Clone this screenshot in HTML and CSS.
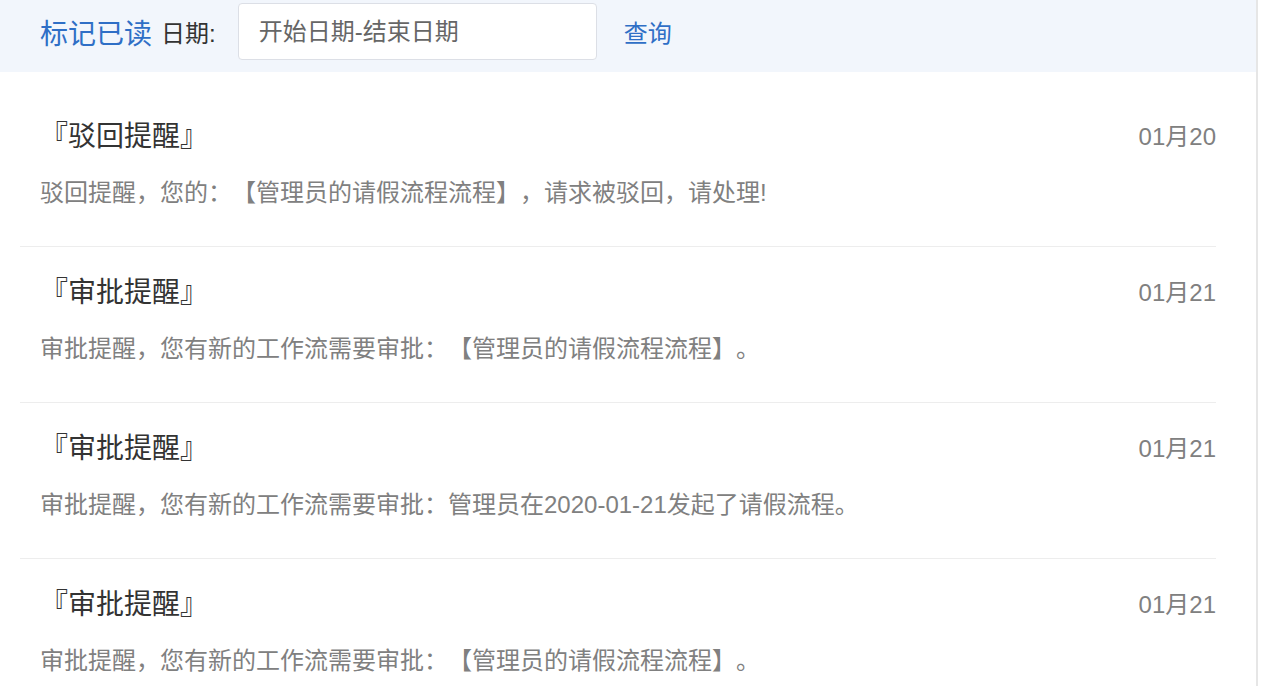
FILE: index.html
```html
<!DOCTYPE html>
<html lang="zh-CN">
<head>
    <meta charset="UTF-8">
    <title>消息提醒</title>
    <link rel="stylesheet" href="styles.css">
</head>
<body>
    <div class="page">
        <div class="toolbar">
            <a class="mark-read">标记已读</a>
            <span class="date-label">日期:</span>
            <input class="date-range" type="text" placeholder="开始日期-结束日期">
            <a class="query">查询</a>
        </div>
        <ul class="msg-list">
            <li class="msg">
                <div class="msg-head">
                    <span class="msg-title">『驳回提醒』</span>
                    <span class="msg-date">01月20</span>
                </div>
                <p class="msg-body">驳回提醒，您的：【管理员的请假流程流程】，请求被驳回，请处理!</p>
            </li>
            <li class="msg">
                <div class="msg-head">
                    <span class="msg-title">『审批提醒』</span>
                    <span class="msg-date">01月21</span>
                </div>
                <p class="msg-body">审批提醒，您有新的工作流需要审批：【管理员的请假流程流程】。</p>
            </li>
            <li class="msg">
                <div class="msg-head">
                    <span class="msg-title">『审批提醒』</span>
                    <span class="msg-date">01月21</span>
                </div>
                <p class="msg-body">审批提醒，您有新的工作流需要审批：管理员在2020-01-21发起了请假流程。</p>
            </li>
            <li class="msg">
                <div class="msg-head">
                    <span class="msg-title">『审批提醒』</span>
                    <span class="msg-date">01月21</span>
                </div>
                <p class="msg-body">审批提醒，您有新的工作流需要审批：【管理员的请假流程流程】。</p>
            </li>
        </ul>
    </div>
</body>
</html>
```

FILE: styles.css
```css
body {
    margin: 0;
    background: #fff;
    font-family: 'Liberation Sans', 'Noto Sans CJK SC', sans-serif;
    text-spacing-trim: space-all;
    overflow: hidden;
}

.page {
    width: 1256px;
    min-height: 100vh;
    border-right: 2px solid #e6e6e6;
}

.toolbar {
    display: flex;
    align-items: center;
    height: 57px;
    padding: 3px 0 12px 40px;
    background: #f2f6fc;
}

.mark-read {
    font-size: 28px;
    color: #2f6fc6;
    cursor: pointer;
}

.date-label {
    font-size: 24px;
    color: #333;
    margin-left: 9px;
}

.date-range {
    box-sizing: border-box;
    width: 359px;
    height: 57px;
    margin-left: 22px;
    padding: 0 20px;
    border: 1px solid #dcdfe6;
    border-radius: 4px;
    background: #fff;
    font-family: inherit;
    font-size: 24px;
    outline: none;
}

.date-range::placeholder {
    color: #666;
}

.query {
    margin-left: 27px;
    font-size: 24px;
    color: #2f6fc6;
    cursor: pointer;
}

.msg-list {
    list-style: none;
    margin: 0;
    padding: 19px 40px 0 20px;
}

.msg {
    padding: 25px 0 35px 20px;
    border-bottom: 1px solid #ededed;
}

.msg-head {
    display: flex;
    justify-content: space-between;
    align-items: center;
    height: 36px;
}

.msg-title {
    font-family: 'Noto Sans CJK SC', sans-serif;
    font-size: 28px;
    color: #333;
}

.msg-date {
    font-size: 24px;
    color: #808080;
}

.msg-body {
    margin: 23px 0 0;
    line-height: 36px;
    font-size: 24px;
    color: #808080;
}
```
